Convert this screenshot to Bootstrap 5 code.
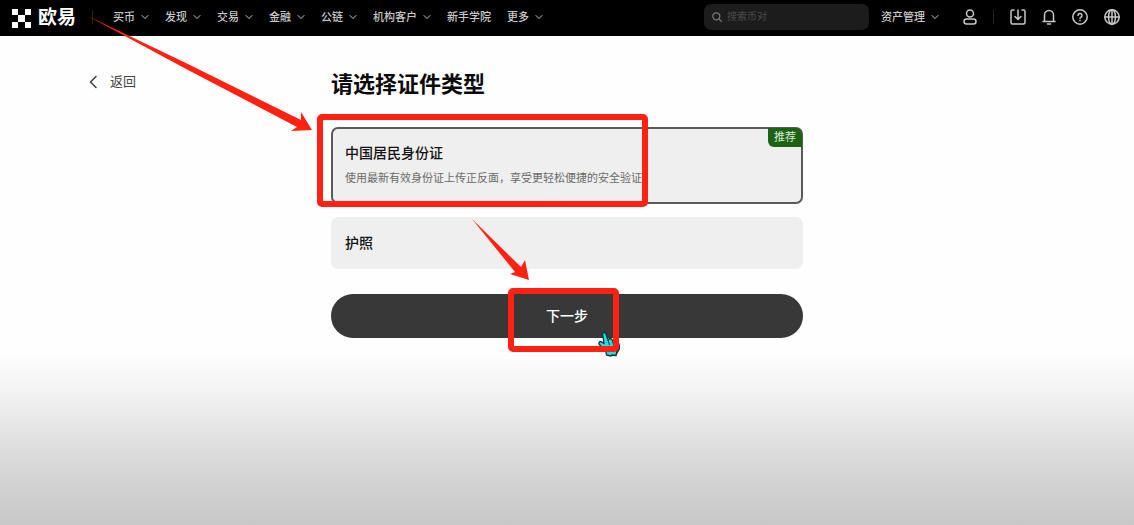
<!DOCTYPE html>
<html lang="zh-CN">
<head>
<meta charset="utf-8">
<meta name="viewport" content="width=device-width, initial-scale=1">
<title>欧易 - 请选择证件类型</title>
<link href="https://cdn.jsdelivr.net/npm/bootstrap@5.3.0/dist/css/bootstrap.min.css" rel="stylesheet">
<style>
  body {
    font-family: "Liberation Sans", "Noto Sans CJK SC", sans-serif;
    color: #111;
    background: linear-gradient(#fefefe 0 67%, #f2f2f2 75%, #e0e0e0 84%, #d1d1d1 93%, #c8c8c8 100%) no-repeat;
    overflow-x: hidden;
  }
  .topbar { background: #000; min-height: 36px; padding: 0 14px 2px 12px; color: #c8c8c8; font-size: 11px; line-height: 16px; }
  .topbar a { color: inherit; }
  .brand-name { font-size: 19px; line-height: 24px; font-weight: 700; color: #fff; }
  .brand { gap: 7px; padding-top: 2px; }
  .rule { width: 1px; height: 14px; background: #222; }
  .main-links { gap: 16px; margin-left: 16px; font-weight: 500; }
  .main-links a, .assets { gap: 6px; }
  .assets { font-weight: 500; }
  .stroke { fill: none; stroke: currentColor; stroke-linecap: round; stroke-linejoin: round; }
  .search-box { width: 165px; height: 26px; background: #1c1c1c; border-radius: 7px; padding: 0 8px; gap: 5px; color: #777; }
  .search-box input { min-width: 0; background: none; border: 0; padding: 0; color: #999; outline: 0; font-size: 10px; }
  .search-box input::placeholder { color: #4c4c4c; opacity: 1; }
  .tools { gap: 16px; }
  .page { display: grid; grid-template-columns: 1fr minmax(0, 472px) 1fr; }
  .back { margin: 36px 0 0 88px; gap: 10px; font-size: 13px; line-height: 20px; color: #444; }
  .verify { padding-top: 34px; }
  .verify h1 { font-size: 22px; line-height: 30px; font-weight: 700; margin-bottom: 27px; color: #0a0a0a; }
  .doc { background: #efefef; border: 2px solid #efefef; border-radius: 7px; padding: 13px 12px; min-height: 52px; cursor: pointer; }
  .btn-check:checked + .doc { border-color: #5a5a5a; min-height: 77px; }
  .doc-name { font-size: 14px; line-height: 22px; font-weight: 500; }
  .doc-note { font-size: 11px; line-height: 16px; color: #6a6a6a; margin-top: 6px; }
  .flag { top: -1px; right: -1px; background: #1c6414; color: #d9ead6; font-size: 11px; line-height: 19px; padding: 0 6px; border-radius: 0 6px 0 6px; }
  .passport { margin-top: 13px; }
  .submit-row { margin-top: 25px; }
  .next, .next:hover, .next:active { height: 44px; background: #383838; color: #fff; border: 0; font-size: 14px; font-weight: 500; padding: 0; }
  .marker { border: 6px solid #ff2212; border-radius: 5px; pointer-events: none; z-index: 3; }
  .marker-card { left: -14px; top: -13px; width: 331px; height: 93px; }
  .marker-next { left: 177px; top: -6px; width: 111px; height: 64px; }
  .pointer { left: 265px; top: 37px; z-index: 2; pointer-events: none; }
  .arrows { left: -241px; top: -22px; z-index: 4; pointer-events: none; }
</style>
</head>
<body class="min-vh-100">
<header class="topbar d-flex align-items-center">
  <a href="#" class="brand d-flex align-items-center text-decoration-none">
    <svg width="19" height="19" viewBox="0 0 19 19" fill="#fff" aria-hidden="true"><path d="M0 0h6v6H0zM13 0h6v6h-6zM6 6h7v7H6zM0 13h6v6H0zM13 13h6v6h-6z"/></svg>
    <span class="brand-name">欧易</span>
  </a>
  <span class="rule ms-3 me-1"></span>
  <nav class="main-links d-flex" aria-label="主导航">
    <a href="#" class="d-flex align-items-center text-decoration-none">买币<svg class="stroke" width="8" height="8"><path d="M1 2.500l3 3 3-3"/></svg></a>
    <a href="#" class="d-flex align-items-center text-decoration-none">发现<svg class="stroke" width="8" height="8"><path d="M1 2.500l3 3 3-3"/></svg></a>
    <a href="#" class="d-flex align-items-center text-decoration-none">交易<svg class="stroke" width="8" height="8"><path d="M1 2.500l3 3 3-3"/></svg></a>
    <a href="#" class="d-flex align-items-center text-decoration-none">金融<svg class="stroke" width="8" height="8"><path d="M1 2.500l3 3 3-3"/></svg></a>
    <a href="#" class="d-flex align-items-center text-decoration-none">公链<svg class="stroke" width="8" height="8"><path d="M1 2.500l3 3 3-3"/></svg></a>
    <a href="#" class="d-flex align-items-center text-decoration-none">机构客户<svg class="stroke" width="8" height="8"><path d="M1 2.500l3 3 3-3"/></svg></a>
    <a href="#" class="d-flex align-items-center text-decoration-none">新手学院</a>
    <a href="#" class="d-flex align-items-center text-decoration-none">更多<svg class="stroke" width="8" height="8"><path d="M1 2.500l3 3 3-3"/></svg></a>
  </nav>
  <label class="search-box d-flex align-items-center ms-auto">
    <svg class="stroke flex-shrink-0" width="10" height="10" stroke-width="1.300"><circle cx="4.300" cy="4.300" r="3.500"/><path d="M7 7l2.400 2.400"/></svg>
    <input type="search" class="flex-fill" placeholder="搜索币对" aria-label="搜索币对">
  </label>
  <a href="#" class="assets d-flex align-items-center text-decoration-none ms-2 ps-1">资产管理<svg class="stroke" width="8" height="8"><path d="M1 2.500l3 3 3-3"/></svg></a>
  <a href="#" class="d-flex ms-4" aria-label="账户"><svg class="stroke" width="14" height="16" stroke-width="1.500"><circle cx="7" cy="4.500" r="3.500"/><rect x="1" y="10" width="12" height="5" rx="2.500"/></svg></a>
  <span class="rule mx-3"></span>
  <div class="tools d-flex align-items-center">
    <a href="#" class="d-flex" aria-label="下载"><svg class="stroke" width="16" height="16" stroke-width="1.500"><path d="M4 1H2.500Q1 1 1 2.500v11Q1 15 2.500 15h11q1.500 0 1.500-1.500v-11Q15 1 13.500 1H12M8 1v9M5 7.500l3 3 3-3"/></svg></a>
    <a href="#" class="d-flex" aria-label="通知"><svg class="stroke" width="14" height="16" stroke-width="1.500"><path d="M2.500 12V6a4.500 4.500 0 0 1 9 0v6M1 12.500h12M5.500 15h3"/></svg></a>
    <a href="#" class="d-flex" aria-label="帮助"><svg class="stroke" width="16" height="16" stroke-width="1.500"><circle cx="8" cy="8" r="7.200"/><path d="M6 6.500a2 2 0 1 1 2.800 1.800Q8 8.700 8 9.500M8 11.600v.1"/></svg></a>
    <a href="#" class="d-flex" aria-label="语言"><svg class="stroke" width="16" height="16" stroke-width="1.500"><circle cx="8" cy="8" r="7.200"/><ellipse cx="8" cy="8" rx="3.500" ry="7.200"/><path d="M1 8h14M8 1v14"/></svg></a>
  </div>
</header>

<main class="page">
  <div>
    <a href="#" class="back d-inline-flex align-items-center text-decoration-none"><svg class="stroke" width="12" height="14" stroke-width="1.600"><path d="M8 1.500L2.500 7 8 12.500"/></svg>返回</a>
  </div>
  <form class="verify position-relative">
    <svg class="arrows position-absolute" width="450" height="270" viewBox="90 14 450 270" fill="#ff2212" aria-hidden="true">
      <path d="M86 15L190 65 301 120 301 112 312 130 291 131 297 127 188 70Z"/>
      <path d="M472 219L521 267 525 260 529 280 510 274 515 272Z"/>
    </svg>
    <h1>请选择证件类型</h1>
    <div class="position-relative">
      <input class="btn-check" type="radio" name="doc" id="doc-id" checked>
      <label class="doc d-block position-relative" for="doc-id">
        <span class="doc-name d-block">中国居民身份证</span>
        <span class="doc-note d-block">使用最新有效身份证上传正反面，享受更轻松便捷的安全验证</span>
        <span class="flag position-absolute">推荐</span>
      </label>
      <span class="marker marker-card position-absolute"></span>
    </div>
    <div class="passport">
      <input class="btn-check" type="radio" name="doc" id="doc-passport">
      <label class="doc d-block" for="doc-passport"><span class="doc-name d-block">护照</span></label>
    </div>
    <div class="submit-row position-relative">
      <button type="button" class="next btn rounded-pill w-100">下一步</button>
      <svg class="pointer position-absolute" width="26" height="28" viewBox="0 0 26 28" aria-hidden="true">
        <path d="M19 8q6 3 5 10l-4 7-2-4z" fill="#12383b"/>
        <path d="M6.500 2.500Q8 .5 9.800 2.500L12 9l1.500-1.500 2 .5 1 1.500 2-.5 1.500 2 1.500 1q1.500 4-.5 8l-1 4.500-4-.5-1 1-4.500-1-.5-3-7-8q-.5-2.500 2-2.500l3 2z" fill="#25dce0" stroke="#123438" stroke-width="1.300" stroke-linejoin="round"/>
        <path d="M12 9l1.500 5M16.500 10l1 4" stroke="#123438" fill="none"/>
      </svg>
      <span class="marker marker-next position-absolute"></span>
    </div>
  </form>
</main>
<script src="https://cdn.jsdelivr.net/npm/bootstrap@5.3.0/dist/js/bootstrap.bundle.min.js"></script>
</body>
</html>
